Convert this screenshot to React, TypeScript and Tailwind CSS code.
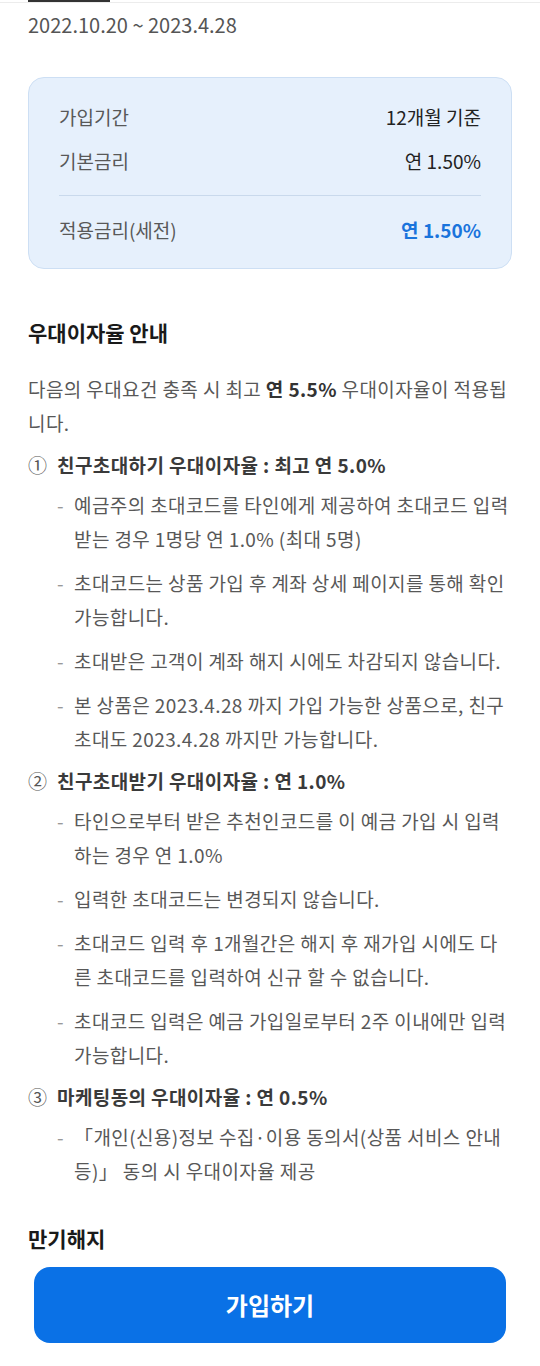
import React from 'react';

const font = { fontFamily: '"Noto Sans CJK KR", "Noto Sans", sans-serif' };

type Group = { no: string; title: string; items: string[] };

const groups: Group[] = [
  {
    no: '①',
    title: '친구초대하기 우대이자율 : 최고 연 5.0%',
    items: [
      '예금주의 초대코드를 타인에게 제공하여 초대코드 입력받는 경우 1명당 연 1.0% (최대 5명)',
      '초대코드는 상품 가입 후 계좌 상세 페이지를 통해 확인 가능합니다.',
      '초대받은 고객이 계좌 해지 시에도 차감되지 않습니다.',
      '본 상품은 2023.4.28 까지 가입 가능한 상품으로, 친구 초대도 2023.4.28 까지만 가능합니다.',
    ],
  },
  {
    no: '②',
    title: '친구초대받기 우대이자율 : 연 1.0%',
    items: [
      '타인으로부터 받은 추천인코드를 이 예금 가입 시 입력하는 경우 연 1.0%',
      '입력한 초대코드는 변경되지 않습니다.',
      '초대코드 입력 후 1개월간은 해지 후 재가입 시에도 다른 초대코드를 입력하여 신규 할 수 없습니다.',
      '초대코드 입력은 예금 가입일로부터 2주 이내에만 입력 가능합니다.',
    ],
  },
  {
    no: '③',
    title: '마케팅동의 우대이자율 : 연 0.5%',
    items: ['「개인(신용)정보 수집·이용 동의서(상품 서비스 안내 등)」 동의 시 우대이자율 제공'],
  },
];

export default function App() {
  return (
    <div className="min-h-screen bg-white text-[#585858]" style={font}>
      {/* sticky tab bar remnant */}
      <div className="h-[3px] border-b border-[#ececec] px-7">
        <div className="h-[2px] w-[82px] bg-[#333]" />
      </div>

      <div className="px-7 pb-[240px]">
        <p className="mt-[8px] text-[20px] leading-[28px] text-[#555]">2022.10.20 ~ 2023.4.28</p>

        {/* rate summary */}
        <div className="mt-[38px] rounded-[16px] border border-[#cddff4] bg-[#e6f0fc] px-[30px] pt-[25px] pb-[24px] text-[19px] leading-[28px]">
          <div className="flex justify-between">
            <span>가입기간</span>
            <span className="text-[#222]">12개월 기준</span>
          </div>
          <div className="mt-[16px] flex justify-between">
            <span>기본금리</span>
            <span className="text-[#222]">연 1.50%</span>
          </div>
          <div className="mt-[20px] border-t border-[#c9d9ec]" />
          <div className="mt-[20px] flex justify-between">
            <span>적용금리(세전)</span>
            <span className="font-bold text-[#1a74dc]">연 1.50%</span>
          </div>
        </div>

        <h2 className="mt-[49px] text-[21px] font-bold leading-[28px] text-[#1a1a1a]">우대이자율 안내</h2>

        <p className="mt-[26px] text-[19px] leading-[34px] tracking-[0.4px]">
          다음의 우대요건 충족 시 최고 <b className="font-bold text-[#333]">연 5.5%</b> 우대이자율이 적용됩니다.
        </p>

        <div className="text-[19px] leading-[34px] tracking-[0.4px]">
          {groups.map((g) => (
            <div key={g.no} className="mt-[8px]">
              <div className="flex font-bold text-[#3a3a3a]">
                <span className="w-[29px] shrink-0 font-normal text-[#555]">{g.no}</span>
                <span>{g.title}</span>
              </div>
              <ul className="mt-[6px] space-y-[10px] pl-[29px]">
                {g.items.map((t) => (
                  <li key={t} className="flex">
                    <span className="w-[17px] shrink-0 text-[#999]">-</span>
                    <span>{t}</span>
                  </li>
                ))}
              </ul>
            </div>
          ))}
        </div>

        <h2 className="mt-[36px] text-[21px] font-bold leading-[28px] text-[#1a1a1a]">만기해지</h2>
      </div>

      {/* bottom action */}
      <div className="fixed inset-x-0 bottom-0">
        <div className="h-[6px] bg-gradient-to-b from-white/0 to-white" />
        <div className="bg-white px-[34px] pt-[11px] pb-[23px]">
          <button className="flex h-[76px] w-full items-center justify-center rounded-[16px] bg-[#0a71e6] text-[24px] font-bold text-white">
            가입하기
          </button>
        </div>
      </div>
    </div>
  );
}
